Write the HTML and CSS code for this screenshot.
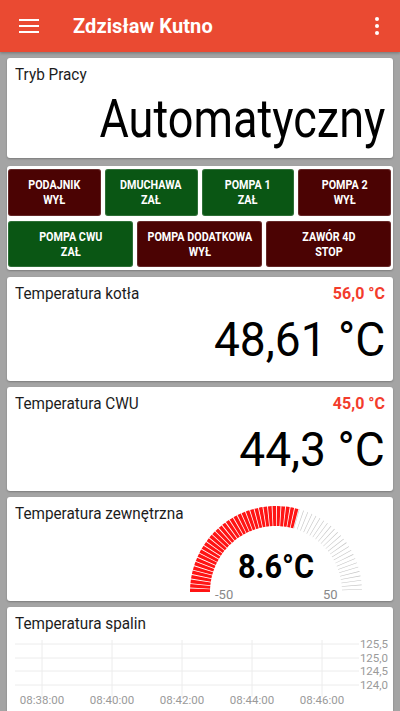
FILE: index.html
```html
<!DOCTYPE html>
<html lang="pl">
<head>
<meta charset="utf-8">
<title>Zdzisław Kutno</title>
<link rel="stylesheet" href="styles.css">
</head>
<body>
<header class="appbar">
  <svg class="menu-icon" width="20" height="16" viewBox="0 0 20 16"><rect x="0" y="1" width="20" height="2"/><rect x="0" y="7" width="20" height="2"/><rect x="0" y="13" width="20" height="2"/></svg>
  <h1 class="appbar-title">Zdzisław Kutno</h1>
  <svg class="more-icon" width="6" height="20" viewBox="0 0 6 20"><circle cx="3" cy="3" r="2"/><circle cx="3" cy="10" r="2"/><circle cx="3" cy="17" r="2"/></svg>
</header>
<main class="content">
  <section class="card mode-card">
    <div class="card-title">Tryb Pracy</div>
    <div class="mode-value"><span class="squeeze">Automatyczny</span></div>
  </section>

  <section class="card buttons-card">
    <div class="btn-row four">
      <div class="btn off"><span class="btn-label">PODAJNIK<br>WYŁ</span></div>
      <div class="btn on"><span class="btn-label">DMUCHAWA<br>ZAŁ</span></div>
      <div class="btn on"><span class="btn-label">POMPA 1<br>ZAŁ</span></div>
      <div class="btn off"><span class="btn-label">POMPA 2<br>WYŁ</span></div>
    </div>
    <div class="btn-row three">
      <div class="btn on"><span class="btn-label">POMPA CWU<br>ZAŁ</span></div>
      <div class="btn off"><span class="btn-label">POMPA DODATKOWA<br>WYŁ</span></div>
      <div class="btn off"><span class="btn-label">ZAWÓR 4D<br>STOP</span></div>
    </div>
  </section>

  <section class="card temp-card">
    <div class="temp-head">
      <span class="card-title">Temperatura kotła</span>
      <span class="setpoint">56,0 °C</span>
    </div>
    <div class="temp-value"><span class="squeeze-num">48,61 °C</span></div>
  </section>

  <section class="card temp-card">
    <div class="temp-head">
      <span class="card-title">Temperatura CWU</span>
      <span class="setpoint">45,0 °C</span>
    </div>
    <div class="temp-value"><span class="squeeze-num">44,3 °C</span></div>
  </section>

  <section class="card gauge-card">
    <div class="gauge-title"><span class="card-title">Temperatura zewnętrzna</span></div>
    <svg class="gauge" width="200" height="96" viewBox="0 0 200 96">
      <path class="gauge-off" d="M120.3 13.77 A76 76 0 0 1 176 87"/>
      <path class="gauge-on" d="M24 87 A76 76 0 0 1 120.3 13.77"/>
      <text class="gauge-value" transform="translate(100 73) scale(0.93 1)" text-anchor="middle">8.6°C</text>
      <text class="gauge-label" x="39" y="94">-50</text>
      <text class="gauge-label" x="147" y="94">50</text>
    </svg>
  </section>

  <section class="card chart-card">
    <div class="card-title">Temperatura spalin</div>
    <svg class="chart" width="386" height="80" viewBox="0 0 386 80">
      <g class="grid">
        <line x1="35" y1="4" x2="35" y2="61"/>
        <line x1="105" y1="4" x2="105" y2="61"/>
        <line x1="175" y1="4" x2="175" y2="61"/>
        <line x1="245" y1="4" x2="245" y2="61"/>
        <line x1="315" y1="4" x2="315" y2="61"/>
        <line x1="8" y1="8" x2="352" y2="8"/>
        <line x1="8" y1="22" x2="352" y2="22"/>
        <line x1="8" y1="35" x2="352" y2="35"/>
        <line x1="8" y1="49" x2="352" y2="49"/>
      </g>
      <g class="axis-y">
        <text x="381" y="12" text-anchor="end">125,5</text>
        <text x="381" y="26" text-anchor="end">125,0</text>
        <text x="381" y="39" text-anchor="end">124,5</text>
        <text x="381" y="53" text-anchor="end">124,0</text>
      </g>
      <g class="axis-x">
        <text x="35" y="68" text-anchor="middle">08:38:00</text>
        <text x="105" y="68" text-anchor="middle">08:40:00</text>
        <text x="175" y="68" text-anchor="middle">08:42:00</text>
        <text x="245" y="68" text-anchor="middle">08:44:00</text>
        <text x="315" y="68" text-anchor="middle">08:46:00</text>
      </g>
    </svg>
  </section>
</main>
</body>
</html>
```

FILE: styles.css
```css
html, body {
  margin: 0;
  padding: 0;
}
body {
  background: #a4a4a4;
  font-family: Roboto, "Noto Sans", sans-serif;
  width: 400px;
  height: 711px;
  overflow: hidden;
}
.appbar {
  height: 52px;
  background: #ea4a32;
  display: flex;
  align-items: center;
  padding: 0 19px;
  box-sizing: border-box;
  color: #fff;
  box-shadow: 0 1px 3px rgba(0,0,0,0.3);
  position: relative;
}
.menu-icon { fill: #fff; flex: none; }
.more-icon { fill: #fff; flex: none; margin-left: auto; margin-right: 1px; }
.appbar-title {
  margin: 0 0 0 34px;
  font-size: 20px;
  font-weight: 700;
  letter-spacing: 0.1px;
}
.content {
  padding: 6px 7px 0;
  display: flex;
  flex-direction: column;
  gap: 6px;
}
.card {
  background: #fff;
  border-radius: 3px;
  box-shadow: 0 1px 2px rgba(0,0,0,0.25);
  box-sizing: border-box;
  flex: none;
}
.squeeze {
  display: inline-block;
  transform: scaleX(0.85);
  transform-origin: right center;
}
.squeeze-num {
  display: inline-block;
  transform: scaleX(0.94);
  transform-origin: right center;
}
.card-title {
  font-size: 17px;
  line-height: 20px;
  color: #1c1c1c;
  display: inline-block;
  transform: scaleX(0.9);
  transform-origin: left center;
  white-space: nowrap;
}
.mode-card {
  height: 100px;
  padding: 6px 8px 0;
}
.mode-value {
  text-align: right;
  font-size: 53px;
  line-height: 60px;
  margin-top: 5px;
  color: #000;
  white-space: nowrap;
}
.buttons-card {
  height: 104px;
  margin-top: 2px;
  padding: 3px 2px 3px 1px;
  display: flex;
  flex-direction: column;
  gap: 5px;
}
.btn-row {
  display: grid;
  gap: 4px;
  flex: 1;
}
.btn-row.four { grid-template-columns: repeat(4, 1fr); }
.btn-row.three { grid-template-columns: repeat(3, 1fr); }
.btn {
  border-radius: 3px;
  color: #fff;
  font-size: 12.5px;
  font-weight: 700;
  line-height: 15px;
  text-align: center;
  display: flex;
  align-items: center;
  justify-content: center;
  box-shadow: inset 0 0 0 1px rgba(255,255,255,0.15);
}
.btn-label {
  display: inline-block;
  white-space: nowrap;
  transform: scaleX(0.86);
}
.btn.off { background: #4b0303; }
.btn.on { background: #0a5614; }
.temp-card {
  height: 104px;
  padding: 6px 8px 0;
}
.buttons-card + .temp-card { margin-top: 1px; }
.temp-head {
  display: flex;
  justify-content: space-between;
  align-items: center;
}
.setpoint {
  color: #f33c2c;
  font-weight: 700;
  font-size: 16px;
}
.temp-value {
  text-align: right;
  font-size: 49px;
  line-height: 56px;
  margin-top: 9px;
  color: #000;
  white-space: nowrap;
}
.gauge-card {
  height: 104px;
  padding: 6px 17px 0 8px;
  display: flex;
  align-items: flex-start;
}
.gauge-title { flex: 1; min-width: 0; }
.gauge { flex: none; margin-top: 2px; }
.gauge-on {
  fill: none;
  stroke: #ff1414;
  stroke-width: 20;
  stroke-dasharray: 3.2 0.8;
}
.gauge-off {
  fill: none;
  stroke: #c4c4c4;
  stroke-width: 20;
  stroke-dasharray: 0.6 3.4;
}
.gauge-value {
  font-family: Roboto, sans-serif;
  font-weight: 700;
  font-size: 33px;
  fill: #000;
}
.gauge-label {
  font-family: Roboto, sans-serif;
  font-size: 13px;
  fill: #888;
}
.chart-card {
  height: 120px;
  padding: 6px 0 0;
}
.chart-card .card-title { margin-left: 8px; }
.chart { display: block; margin-top: 3px; }
.grid line { stroke: #ececec; stroke-width: 1; }
.axis-y text, .axis-x text {
  font-family: Roboto, sans-serif;
  font-size: 11.5px;
  fill: #9a9a9a;
}
```
